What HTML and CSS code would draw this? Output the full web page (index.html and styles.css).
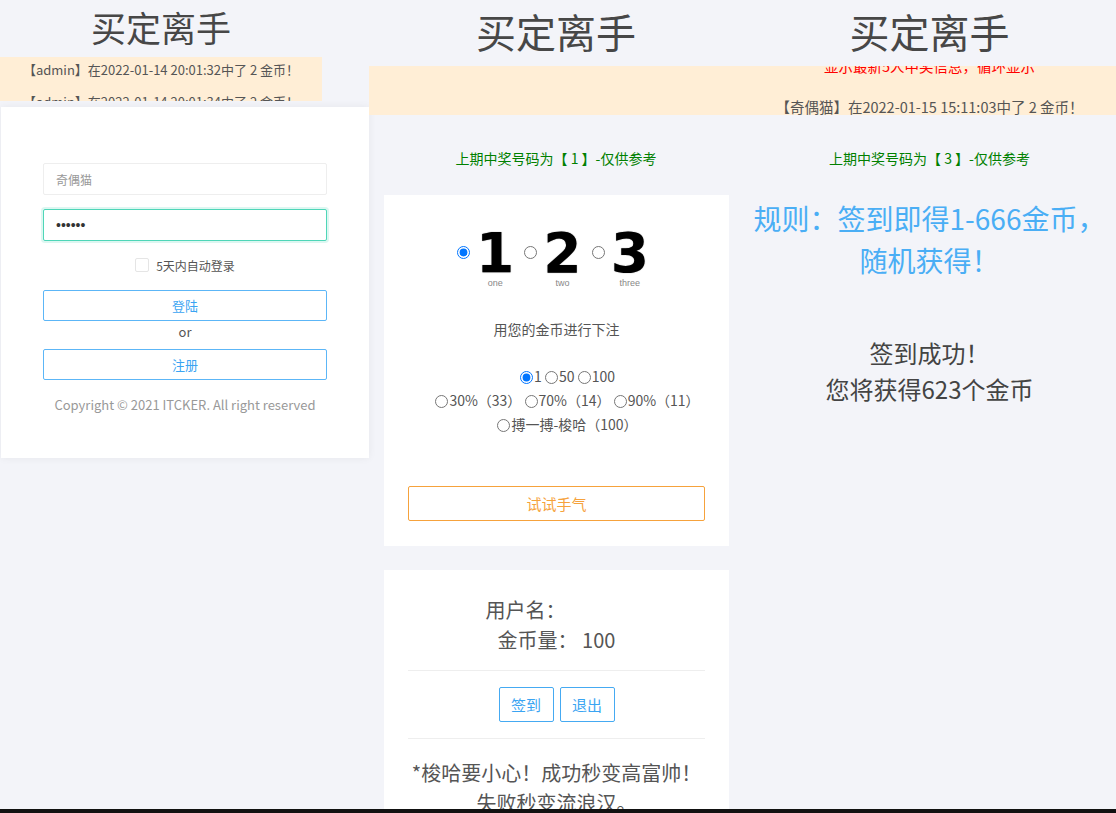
FILE: index.html
```html
<!DOCTYPE html>
<html lang="zh-CN">
<head>
    <meta charset="UTF-8">
    <meta name="viewport" content="width=device-width, initial-scale=1.0">
    <title>买定离手</title>
    <link rel="stylesheet" href="styles.css">
</head>
<body>
    <div class="page">
        <!-- login -->
        <section class="col col-login">
            <h1 class="title title-small">买定离手</h1>
            <div class="ticker ticker-short">
                <p>【admin】在2022-01-14 20:01:32中了 2 金币！</p>
                <p>【admin】在2022-01-14 20:01:34中了 2 金币！</p>
            </div>
            <div class="login-card">
                <form class="login-form">
                    <input class="field" type="text" placeholder="奇偶猫">
                    <input class="field field-focus field-pass" type="password" value="123456">
                    <label class="remember"><input type="checkbox">5天内自动登录</label>
                    <button type="button" class="btn-line">登陆</button>
                    <div class="or">or</div>
                    <button type="button" class="btn-line">注册</button>
                    <p class="copyright">Copyright © 2021 ITCKER. All right reserved</p>
                </form>
            </div>
        </section>

        <!-- game -->
        <section class="col col-game">
            <h1 class="title">买定离手</h1>
            <div class="ticker"></div>
            <p class="last-draw">上期中奖号码为【 1 】-仅供参考</p>

            <div class="card card-bet">
                <div class="picks">
                    <label class="pick">
                        <input type="radio" name="pick" checked>
                        <span class="pick-face"><span class="pick-num">1</span><span class="pick-name">one</span></span>
                    </label>
                    <label class="pick">
                        <input type="radio" name="pick">
                        <span class="pick-face"><span class="pick-num">2</span><span class="pick-name">two</span></span>
                    </label>
                    <label class="pick">
                        <input type="radio" name="pick">
                        <span class="pick-face"><span class="pick-num">3</span><span class="pick-name">three</span></span>
                    </label>
                </div>
                <p class="bet-hint">用您的金币进行下注</p>
                <div class="bet-options">
                    <div>
                        <label><input type="radio" name="bet" checked>1</label>
                        <label><input type="radio" name="bet">50</label>
                        <label><input type="radio" name="bet">100</label>
                    </div>
                    <div>
                        <label><input type="radio" name="bet">30%（33）</label>
                        <label><input type="radio" name="bet">70%（14）</label>
                        <label><input type="radio" name="bet">90%（11）</label>
                    </div>
                    <div>
                        <label><input type="radio" name="bet">搏一搏-梭哈（100）</label>
                    </div>
                </div>
                <button type="button" class="btn-luck">试试手气</button>
            </div>

            <div class="card card-user">
                <div class="user-info">
                    <div>用户名：<span class="blank"></span></div>
                    <div>金币量： 100</div>
                </div>
                <hr class="divider">
                <div class="actions">
                    <button type="button" class="btn-small">签到</button>
                    <button type="button" class="btn-small">退出</button>
                </div>
                <hr class="divider">
                <p class="warning">*梭哈要小心！成功秒变高富帅！<br>失败秒变流浪汉。</p>
            </div>
        </section>

        <!-- sign in -->
        <section class="col col-sign">
            <h1 class="title">买定离手</h1>
            <div class="ticker">
                <p class="notice">显示最新5人中奖信息，循环显示</p>
                <p>【奇偶猫】在2022-01-15 15:11:03中了 2 金币！</p>
            </div>
            <p class="last-draw">上期中奖号码为【 3 】-仅供参考</p>
            <p class="rule">规则：签到即得1-666金币，<br>随机获得！</p>
            <p class="result">签到成功！<br>您将获得623个金币</p>
        </section>
    </div>
    <div class="screen-edge"></div>
</body>
</html>
```

FILE: styles.css
```css
* {
    box-sizing: border-box;
}
html, body {
    height: 100%;
    overflow: hidden;
}
body {
    margin: 0;
    background: #f3f4f9;
    color: #555;
    font-family: "Noto Sans CJK SC", "Noto Sans", sans-serif;
    font-size: 13px;
}
.page {
    display: flex;
}
.col {
    flex: none;
    text-align: center;
}
.col-login {
    width: 369px;
}
.col-game {
    width: 374px;
    font-size: 14px;
}
.col-sign {
    width: 373px;
    font-size: 14px;
}
.title {
    margin: 0;
    height: 66px;
    line-height: 62px;
    font-size: 40px;
    font-weight: normal;
    color: #474747;
}
.title-small {
    width: 322px;
    height: 57px;
    line-height: 54px;
    font-size: 35px;
}

/* ticker */
.ticker {
    height: 49px;
    overflow: hidden;
    background: #ffeed6;
    font-size: 14.5px;
}
.ticker p {
    margin: 0;
    line-height: 26px;
}
.ticker-short {
    width: 322px;
    height: 44px;
    font-size: 13px;
}
.ticker-short p {
    margin-bottom: 6px;
}
.ticker .notice {
    margin-top: -10px;
    line-height: 20px;
    color: #f00;
}
.ticker .notice + p {
    margin-top: 18px;
}

/* login */
.login-card {
    margin: 6px 0 0 1px;
    width: 368px;
    padding: 56px 42px 43px;
    background: #fff;
    box-shadow: 0 0 8px rgba(0,0,0,0.06);
}
.field {
    display: block;
    width: 100%;
    height: 32px;
    padding: 0 12px;
    border: 1px solid #eee;
    border-radius: 2px;
    font: inherit;
    font-size: 12px;
    color: #444;
    outline: none;
}
.field::placeholder {
    color: #999;
}
.field + .field {
    margin-top: 14px;
}
.field-focus {
    border-color: #4fd6b8;
    box-shadow: 0 0 0 2px rgba(79,214,184,0.2);
}
.field-pass {
    font-family: "Liberation Sans", Arial, sans-serif;
    font-size: 14px;
    color: #333;
}
.remember {
    display: flex;
    align-items: center;
    justify-content: center;
    height: 20px;
    margin-top: 14px;
    font-size: 12px;
}
.remember input {
    appearance: none;
    width: 14px;
    height: 14px;
    margin: 0 7px 0 0;
    border: 1px solid #e5e5e5;
    border-radius: 2px;
    background: #fff;
}
.btn-line {
    display: block;
    width: 100%;
    height: 31px;
    margin-top: 15px;
    border: 1px solid #5cb6f7;
    border-radius: 2px;
    background: #fff;
    color: #3aa4f2;
    font: inherit;
    font-size: 13px;
}
.or {
    margin-top: 1px;
    line-height: 20px;
    font-size: 13px;
}
.or + .btn-line {
    margin-top: 7px;
}
.copyright {
    margin: 15px 0 0;
    line-height: 20px;
    font-size: 13px;
    color: #999;
}

/* game */
.last-draw {
    margin: 34px 0 0;
    line-height: 18px;
    color: #008000;
}
.card {
    margin: 28px 14px 0 15px;
    background: #fff;
}
.card-bet {
    padding: 36px 24px 25px;
}
.picks {
    display: flex;
    justify-content: center;
    gap: 10px;
    padding-right: 7px;
}
.pick {
    display: flex;
    align-items: flex-start;
}
.pick input {
    width: 13px;
    height: 13px;
    margin: 15px 6px 0 0;
}
.pick-face {
    display: flex;
    flex-direction: column;
    align-items: center;
}
.pick-num {
    font: bold 55px/44px "DejaVu Sans", Verdana, sans-serif;
    color: #000;
    text-shadow: 0 0 1px rgba(0,0,0,0.6);
}
.pick-name {
    margin-top: 2px;
    font: 9px/12px "Liberation Sans", Arial, sans-serif;
    color: #888;
}
.bet-hint {
    margin: 30px 0 0;
    line-height: 20px;
}
.bet-options {
    margin-top: 25px;
    padding-left: 22px;
    line-height: 24px;
}
.bet-options input {
    margin: 0 1px 0 0;
    vertical-align: -2px;
}
.btn-luck {
    display: block;
    width: 100%;
    height: 35px;
    margin-top: 50px;
    border: 1px solid #f6a23c;
    border-radius: 2px;
    background: #fff;
    color: #f6a23c;
    font: inherit;
    font-size: 15px;
}
.card-user {
    margin-top: 24px;
    padding: 25px 24px 0;
    min-height: 260px;
}
.user-info {
    font-size: 20px;
    line-height: 30px;
}
.user-info .blank {
    display: inline-block;
    width: 62px;
}
.divider {
    margin: 15px 0 0;
    border: 0;
    border-top: 1px solid #eee;
}
.actions {
    display: flex;
    justify-content: center;
    gap: 6px;
    margin-top: 16px;
}
.actions + .divider {
    margin-top: 16px;
}
.btn-small {
    width: 55px;
    height: 35px;
    border: 1px solid #45aaf2;
    border-radius: 2px;
    background: #fff;
    color: #3aa4f2;
    font: inherit;
    font-size: 15px;
}
.warning {
    margin: 19px 0 0;
    font-size: 20px;
    line-height: 30px;
}

/* sign in */
.rule {
    margin: 30px 0 0;
    font-size: 28px;
    line-height: 42px;
    color: #4aaef5;
}
.result {
    margin: 54px 0 0;
    font-size: 24px;
    line-height: 36px;
    color: #444;
}
.screen-edge {
    position: fixed;
    left: 0;
    right: 0;
    bottom: 0;
    height: 4px;
    background: #111;
}
```
